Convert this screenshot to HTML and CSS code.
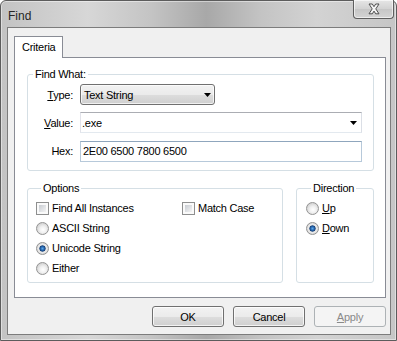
FILE: index.html
```html
<!DOCTYPE html>
<html>
<head>
<meta charset="utf-8">
<title>Find</title>
<link rel="stylesheet" href="styles.css">
</head>
<body>
<div class="window">
  <div class="titlebar">
    <span class="title">Find</span>
    <div class="close">
      <svg width="14" height="12" viewBox="-1.5 -1 14 12"><path d="M0.5 0H3.8L5.5 2.7L7.2 0H10.5L7.3 4.9L10.5 9.8H7.2L5.5 7.1L3.8 9.8H0.5L3.7 4.9Z" fill="#f4f4f4" stroke="#4f4f4f" stroke-width="1" stroke-linejoin="round"/></svg>
    </div>
  </div>
  <div class="client">
    <div class="tabs"><div class="tab">Criteria</div></div>
    <div class="panel">
      <fieldset class="group findwhat">
        <legend>Find What:</legend>
        <div class="form">
          <label class="lbl"><u>T</u>ype:</label>
          <div class="select"><span>Text String</span><svg class="arrow" width="7" height="4" viewBox="0 0 7 4"><path d="M0 0H7L3.5 4Z" fill="#000"/></svg></div>
          <label class="lbl"><u>V</u>alue:</label>
          <div class="combo"><span>.exe</span><svg class="arrow" width="7" height="4" viewBox="0 0 7 4"><path d="M0 0H7L3.5 4Z" fill="#000"/></svg></div>
          <label class="lbl hexlbl">Hex:</label>
          <div class="input hex">2E00 6500 7800 6500</div>
        </div>
      </fieldset>
      <div class="lower">
        <fieldset class="group options">
          <legend>Options</legend>
          <div class="optgrid">
            <div class="item"><span class="check"></span>Find All Instances</div>
            <div class="item"><span class="check"></span>Match Case</div>
            <div class="item"><span class="radio"></span>ASCII String</div>
            <div></div>
            <div class="item"><span class="radio on"></span>Unicode String</div>
            <div></div>
            <div class="item"><span class="radio"></span>Either</div>
          </div>
        </fieldset>
        <fieldset class="group direction">
          <legend>Direction</legend>
          <div class="dirlist">
            <div class="item"><span class="radio"></span><span><u>U</u>p</span></div>
            <div class="item"><span class="radio on"></span><span><u>D</u>own</span></div>
          </div>
        </fieldset>
      </div>
    </div>
    <div class="buttons">
      <div class="btn">OK</div>
      <div class="btn">Cancel</div>
      <div class="btn disabled"><u>A</u>pply</div>
    </div>
  </div>
</div>
</body>
</html>
```

FILE: styles.css
```css
* { box-sizing: border-box; }
html, body { margin: 0; padding: 0; }
body {
  width: 397px;
  height: 341px;
  overflow: hidden;
  background: #ffffff;
  font-family: "Liberation Sans", Arial, sans-serif;
  font-size: 11px;
  letter-spacing: -0.25px;
  color: #000;
}
.window {
  width: 397px;
  height: 341px;
  border: 1px solid #5c5c5c;
  border-radius: 6px 6px 0 0;
  background: linear-gradient(90deg, #c3c3c3 0%, #d7d7d7 22%, #c4c4c4 38%, #a8a8a8 52%, #c4c4c4 66%, #d3d3d3 80%, #c6c6c6 100%);
  box-shadow: inset 0 0 0 1px rgba(255,255,255,0.45);
  padding: 0 5px 5px 6px;
  display: flex;
  flex-direction: column;
}
.titlebar {
  height: 26px;
  display: flex;
  align-items: center;
  padding-left: 1px;
}
.title {
  font-size: 12px;
  letter-spacing: 0;
  color: #262626;
  padding-top: 3px;
}
.close {
  margin-left: auto;
  align-self: flex-start;
  margin-top: -1px;
  margin-right: -3px;
  width: 41px;
  height: 19px;
  border: 1px solid #5e5e5e;
  border-top: none;
  border-radius: 0 0 4px 4px;
  background: linear-gradient(#e6e6e6, #d2d2d2 50%, #c6c6c6 51%, #d4d4d4);
  box-shadow: inset 0 0 0 1px rgba(255,255,255,0.6);
  display: flex;
  align-items: center;
  justify-content: center;
}
.client {
  flex: 1;
  border: 1px solid #7c7c7c;
  background: #f0f0f0;
  padding: 8px 4px 7px 6px;
  display: flex;
  flex-direction: column;
}
.tabs { display: flex; }
.tab {
  position: relative;
  z-index: 1;
  width: 49px;
  height: 22px;
  margin-bottom: -1px;
  border: 1px solid #898c95;
  border-bottom: none;
  background: #fff;
  padding-left: 7px;
  line-height: 20px;
}
.panel {
  height: 241px;
  border: 1px solid #898c95;
  background: #fff;
  padding: 10px 11px 13px 12px;
}
.group {
  margin: 0;
  min-width: 0;
  border: 1px solid #d5dfe5;
  border-radius: 3px;
}
.group legend {
  padding: 0 2px;
  margin-left: 5px;
  line-height: 13px;
}
.findwhat { padding: 3px 11px 9px 0; }
.form {
  display: grid;
  grid-template-columns: 45px 1fr;
  column-gap: 7px;
  row-gap: 7px;
  grid-auto-rows: 21px;
  align-items: center;
}
.lbl { text-align: right; }
.hexlbl, .hex { margin-top: 1px; }
.select {
  width: 135px;
  height: 21px;
  border: 1px solid #707070;
  border-radius: 3px;
  background: linear-gradient(#f2f2f2 0%, #ebebeb 50%, #dddddd 51%, #cfcfcf 100%);
  box-shadow: inset 0 0 0 1px rgba(255,255,255,0.7);
  display: flex;
  align-items: center;
  padding: 0 3px 0 3px;
}
.select span, .combo span { flex: 1; }
.combo {
  height: 21px;
  border: 1px solid #dbdfe6;
  border-top-color: #abadb3;
  border-left-color: #e2e3ea;
  border-bottom-color: #e3e9ef;
  background: #fff;
  display: flex;
  align-items: center;
  padding: 0 4px 0 1px;
}
.input {
  height: 21px;
  border: 1px solid #b7c9da;
  border-top-color: #8fa6bd;
  background: #fff;
  display: flex;
  align-items: center;
  padding: 0 2px;
}
.lower {
  display: flex;
  gap: 13px;
  margin-top: 11px;
}
.options { flex: 1; padding: 3px 0 4px 8px; }
.direction { width: 78px; flex: none; padding: 3px 0 4px 9px; }
.optgrid {
  display: grid;
  grid-template-columns: 146px auto;
  grid-auto-rows: 20px;
  align-items: center;
}
.dirlist {
  display: grid;
  grid-auto-rows: 20px;
  align-items: center;
}
.item {
  display: flex;
  align-items: center;
  gap: 3px;
}
.check {
  flex: none;
  width: 13px;
  height: 13px;
  border: 1px solid #8e8f8f;
  padding: 2px;
  background: linear-gradient(135deg, #c8ccd2, #f4f4f4) content-box, #fafafa;
}
.radio {
  flex: none;
  width: 13px;
  height: 13px;
  border-radius: 50%;
  border: 1px solid #939393;
  background: radial-gradient(circle at 55% 60%, #ffffff 0, #f1f1f1 35%, #d2d2d2 75%, #c4c4c4 100%);
}
.radio.on {
  background: radial-gradient(circle at 50% 50%, #5fa8e6 0, #2c6fb8 1.6px, #123f7a 2.8px, #dadada 3.4px, #ececec 4.2px, #d0d0d0 6px);
}
.buttons {
  display: flex;
  justify-content: flex-end;
  gap: 9px;
  margin-top: 8px;
}
.btn {
  width: 72px;
  height: 21px;
  border: 1px solid #707070;
  border-radius: 3px;
  background: linear-gradient(#f2f2f2 0%, #ebebeb 50%, #dddddd 51%, #cfcfcf 100%);
  box-shadow: inset 0 0 0 1px rgba(255,255,255,0.75);
  display: flex;
  align-items: center;
  justify-content: center;
}
.btn.disabled {
  border-color: #adb2b5;
  background: #f4f4f4;
  box-shadow: none;
  color: #8a8a8a;
}
```
